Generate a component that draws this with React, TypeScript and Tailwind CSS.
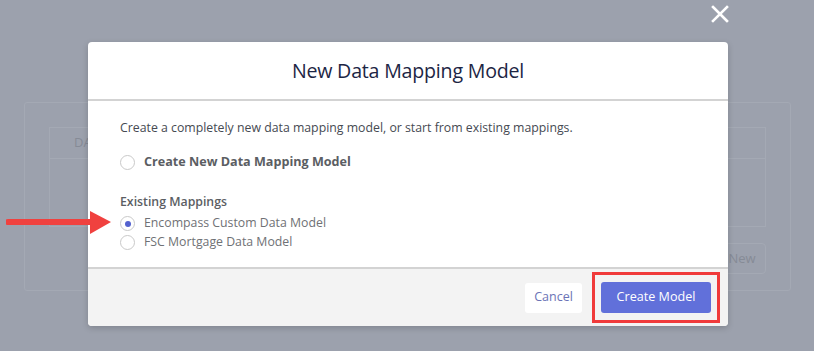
import React from "react";

const font = { fontFamily: '"Open Sans", "Noto Sans", Arial, sans-serif' };

function Radio({ checked, label, bold }: { checked?: boolean; label: string; bold?: boolean }) {
  return (
    <label className="flex items-center gap-[9px] h-[19px]">
      <span className="w-[15px] h-[15px] rounded-full border border-[#c9c9c9] bg-white flex items-center justify-center shrink-0">
        {checked && <span className="w-[6px] h-[6px] rounded-full bg-[#5462cf]" />}
      </span>
      <span
        className={
          bold
            ? "text-[12.6px] font-bold text-[#5b5e63]"
            : "text-[12.3px] text-[#6f7175]"
        }
      >
        {label}
      </span>
    </label>
  );
}

export default function App() {
  return (
    <div className="relative w-[814px] h-[351px] overflow-hidden bg-[#9ca1ad]" style={font}>
      {/* page behind the overlay */}
      <div className="pt-[102px] px-[24px]">
        <div className="w-[767px] h-[189px] rounded-[3px] border border-[#a4a9b4] pt-[24px] px-[24px]">
          <div className="h-[100px] border border-[#a4a9b4]">
            <div className="h-[31px] border-b border-[#a4a9b4] flex items-center pl-[24px] text-[13px] text-[#868b96]">
              DA
            </div>
          </div>
          <div className="flex justify-end mt-[16px]">
            <div className="w-[48px] h-[31px] rounded-[4px] border border-[#a4a9b4] flex items-center justify-center text-[13px] text-[#868b96]">
              New
            </div>
          </div>
        </div>
      </div>

      {/* close icon */}
      <svg
        className="absolute left-[711px] top-[5px]"
        width="18"
        height="18"
        viewBox="0 0 18 18"
        fill="none"
        stroke="white"
        strokeWidth="2.6"
        strokeLinecap="square"
      >
        <path d="M2 2 L16 16 M16 2 L2 16" />
      </svg>

      {/* modal */}
      <div className="absolute left-[88px] top-[42px] w-[640px] bg-white rounded-[4px] shadow-[0_2px_6px_rgba(0,0,0,0.18)] overflow-hidden">
        <div className="h-[59px] border-b-2 border-[#d3d3d3] flex items-center justify-center">
          <h2 className="text-[19.6px] text-[#1c2544] tracking-[-0.2px]">New Data Mapping Model</h2>
        </div>
        <div className="px-[32px] pt-[18px] pb-[15px]">
          <p className="text-[12.3px] leading-[18px] text-[#464a52]">
            Create a completely new data mapping model, or start from existing mappings.
          </p>
          <div className="mt-[16px]">
            <Radio bold label="Create New Data Mapping Model" />
          </div>
          <div className="mt-[21px] text-[12.3px] leading-[18px] font-semibold text-[#5b5e63]">
            Existing Mappings
          </div>
          <div className="mt-[3px] flex flex-col">
            <Radio checked label="Encompass Custom Data Model" />
            <Radio label="FSC Mortgage Data Model" />
          </div>
        </div>
        <div className="border-t-2 border-[#d3d3d3] bg-[#f3f3f3] flex justify-end items-center gap-[10px] pr-[8px] py-[3px]">
          <button className="h-[30px] w-[57px] bg-white rounded-[3px] text-[12.5px] text-[#6b73b6]">
            Cancel
          </button>
          <div className="border-[3px] border-[#f03a3a] px-[6px] py-[7px]">
            <button className="w-[110px] h-[31px] bg-[#6170da] rounded-[3px] text-[12.6px] text-white">
              Create Model
            </button>
          </div>
        </div>
      </div>

      {/* annotation arrow */}
      <svg className="absolute left-[6px] top-[210px]" width="108" height="25" viewBox="0 0 108 25">
        <path d="M2 12 L86 12" stroke="#f0413f" strokeWidth="6" strokeLinecap="round" />
        <path d="M84 1 L105 12 L84 24 Z" fill="#f0413f" />
      </svg>
    </div>
  );
}
